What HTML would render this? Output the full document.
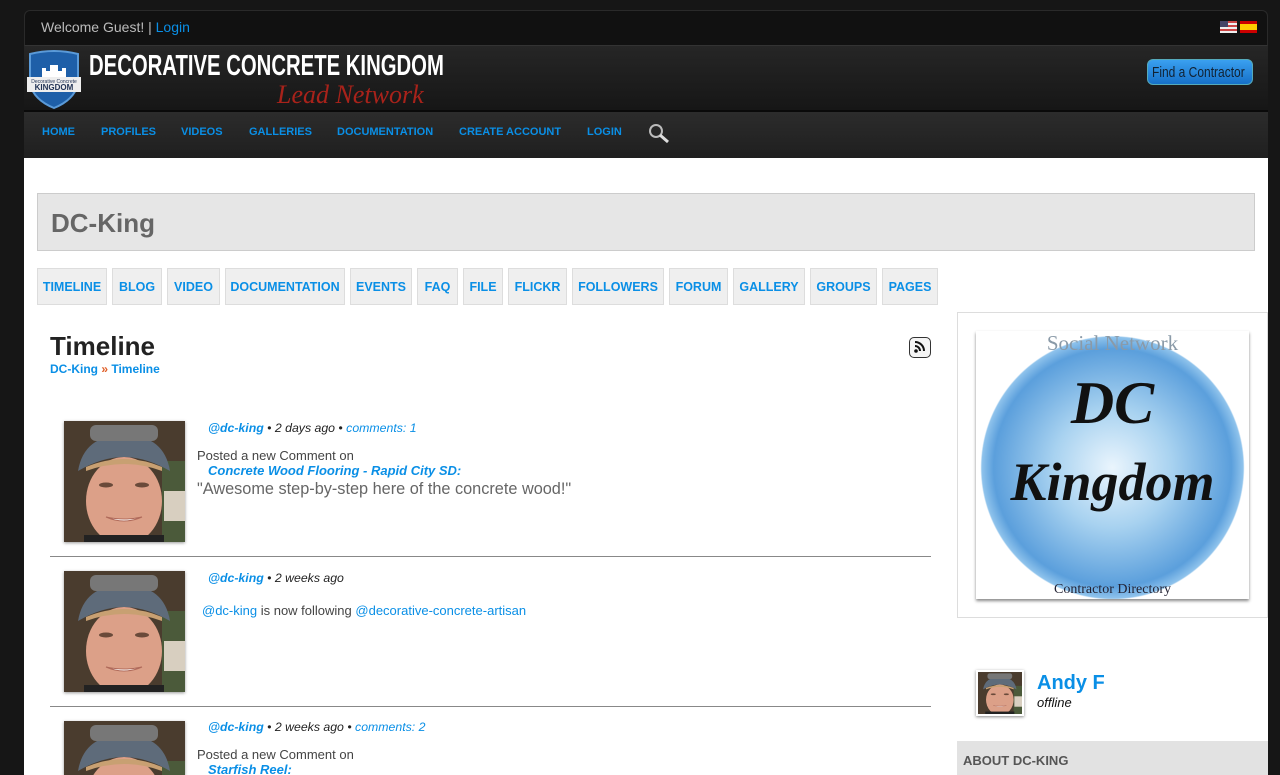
<!DOCTYPE html>
<html style="overflow:hidden;height:775px"><head><meta charset="utf-8">
<style>
*{margin:0;padding:0;box-sizing:border-box}
body{width:1280px;height:775px;overflow:hidden;background:#161616;font-family:"Liberation Sans",Arial,sans-serif;position:relative}
.abs{position:absolute}
a{color:#0a8fe6;text-decoration:none}
.top{left:24px;top:10px;width:1244px;height:36px;background:#111;border-radius:6px 6px 0 0;border:1px solid #2a2a2a;border-bottom:1px solid #333}
.hdr{left:24px;top:46px;width:1244px;height:66px;background:linear-gradient(#262626,#161616);border-bottom:2px solid #0a0a0a}
.nav{left:24px;top:112px;width:1244px;height:46px;background:linear-gradient(#2c2c2c,#1f1f1f)}
.nav span{position:absolute;top:14px;font-size:11px;font-weight:bold;color:#0a8fe6}
.main{left:24px;top:158px;width:1244px;height:617px;background:#fff;overflow:hidden}
.tab{position:absolute;top:268px;height:37px;background:#efefef;border:1px solid #ddd;font-size:12.5px;font-weight:bold;color:#0a8fe6;text-align:center;line-height:36px}
.av{position:absolute;width:121px;height:121px;box-shadow:0 1px 3px #999}
.meta{position:absolute;font-size:12.3px;font-style:italic;color:#222;white-space:nowrap}
.meta b{color:#0a8fe6}
.hr{position:absolute;left:50px;width:881px;height:1px;background:#888}
</style></head><body>
<svg width="0" height="0" style="position:absolute;top:0;left:0"><defs>
<symbol id="face" viewBox="0 0 121 121">
<rect width="121" height="121" fill="#4a3c2e"/>
<rect x="98" y="40" width="23" height="81" fill="#4b5a3a"/>
<rect x="100" y="70" width="21" height="30" fill="#d8cfc0"/>
<ellipse cx="60" cy="80" rx="38" ry="44" fill="#dca088"/>
<path d="M14 50 Q20 14 60 14 Q100 14 106 50 Q82 36 60 36 Q38 36 14 50Z" fill="#5e6b7a"/>
<path d="M22 46 Q60 30 98 46 L98 50 Q60 36 22 50Z" fill="#c8a072"/>
<rect x="26" y="4" width="68" height="16" rx="6" fill="#777"/>
<ellipse cx="42" cy="64" rx="7" ry="2.5" fill="#6a4a3a"/>
<ellipse cx="78" cy="64" rx="7" ry="2.5" fill="#6a4a3a"/>
<path d="M42 96 Q60 104 78 96 Q60 100 42 96Z" fill="#fff" stroke="#b06a5a" stroke-width="1"/>
<rect x="20" y="114" width="80" height="7" fill="#222"/>
</symbol></defs></svg>

<div class="abs top"><span class="abs" style="left:16px;top:8px;font-size:14px;color:#bbb">Welcome Guest! | <a style="color:#0a8fe6">Login</a></span>
<div class="abs" style="left:1195px;top:10px;width:17px;height:12px;background:repeating-linear-gradient(#c44 0 2px,#eee 2px 4px)"><div style="width:8px;height:6px;background:#446"></div></div>
<div class="abs" style="left:1215px;top:10px;width:17px;height:12px;background:linear-gradient(#c00 0 3px,#fc0 3px 9px,#c00 9px)"></div>
</div>
<div class="abs hdr">
<svg class="abs" style="left:2px;top:4px" width="56" height="60" viewBox="0 0 56 60"><path d="M4 4 Q28 -2 52 4 L52 34 Q48 50 28 58 Q8 50 4 34Z" fill="#1e5fa8" stroke="#5a9ad8" stroke-width="2"/><path d="M16 28 V18 h4 v3 h4 v-6 h8 v6 h4 v-3 h4 v10Z" fill="#fff"/><rect x="1" y="27" width="54" height="15" fill="#eee"/><text x="28" y="33" font-size="5" text-anchor="middle" fill="#235" font-family="Liberation Sans">Decorative Concrete</text><text x="28" y="40" font-size="8" font-weight="bold" text-anchor="middle" fill="#235" font-family="Liberation Sans">KINGDOM</text></svg>
<div class="abs" style="left:65px;top:4px;font-family:'Liberation Sans',sans-serif;font-weight:bold;font-size:29px;color:#fff;white-space:nowrap;transform:scaleX(0.7);transform-origin:left">DECORATIVE CONCRETE KINGDOM</div>
<div class="abs" style="left:253px;top:34px;font-family:'Liberation Serif',serif;font-style:italic;font-size:26px;color:#a8221a">Lead Network</div>
<div class="abs" style="left:1123px;top:13px;width:106px;height:26px;border-radius:6px;background:linear-gradient(#3aa0f0,#1670c8);border:1px solid #5ab;overflow:hidden"><span style="position:absolute;left:4px;top:4px;color:#123;font-size:15px;white-space:nowrap;transform:scaleX(0.8);transform-origin:left">Find a Contractor</span></div>
</div>
<div class="abs nav">
<span style="left:18px">HOME</span><span style="left:77px">PROFILES</span><span style="left:157px">VIDEOS</span><span style="left:225px">GALLERIES</span><span style="left:313px">DOCUMENTATION</span><span style="left:435px">CREATE ACCOUNT</span><span style="left:563px">LOGIN</span>
<svg class="abs" style="left:624px;top:11px" width="24" height="22"><circle cx="8" cy="8" r="6" fill="none" stroke="#bbb" stroke-width="2"/><path d="M12 12 L20 19" stroke="#ddd" stroke-width="3"/></svg>
</div>
<div class="abs main">

<div class="abs" style="left:13px;top:35px;width:1218px;height:58px;background:#e6e6e6;border:1px solid #ccc"><span class="abs" style="left:13px;top:14px;font-size:26px;font-weight:bold;color:#666">DC-King</span></div>

<div style="position:absolute;left:-24px;top:-158px;width:1280px;height:775px;overflow:hidden">
<div class="tab" style="left:37px;width:70px">TIMELINE</div>
<div class="tab" style="left:112px;width:50px">BLOG</div>
<div class="tab" style="left:167px;width:53px">VIDEO</div>
<div class="tab" style="left:225px;width:120px">DOCUMENTATION</div>
<div class="tab" style="left:350px;width:62px">EVENTS</div>
<div class="tab" style="left:417px;width:41px">FAQ</div>
<div class="tab" style="left:463px;width:40px">FILE</div>
<div class="tab" style="left:508px;width:59px">FLICKR</div>
<div class="tab" style="left:572px;width:92px">FOLLOWERS</div>
<div class="tab" style="left:669px;width:59px">FORUM</div>
<div class="tab" style="left:733px;width:72px">GALLERY</div>
<div class="tab" style="left:810px;width:67px">GROUPS</div>
<div class="tab" style="left:882px;width:56px">PAGES</div>

<div class="abs" style="left:50px;top:331px;font-size:26px;font-weight:bold;color:#222">Timeline</div>
<div class="abs" style="left:50px;top:362px;font-size:12px;font-weight:bold;color:#0a8fe6">DC-King <span style="color:#e0602a">»</span> Timeline</div>
<div class="abs" style="left:909px;top:337px;width:22px;height:21px;border:1.5px solid #333;border-radius:5px;background:#f4f4f4"><svg width="19" height="18" viewBox="0 0 19 18"><circle cx="6" cy="13" r="1.8" fill="#111"/><path d="M5 8 A5 5 0 0 1 10 13" stroke="#111" stroke-width="2" fill="none"/><path d="M5 4 A9 9 0 0 1 14 13" stroke="#111" stroke-width="2" fill="none"/></svg></div>

<svg class="av" style="left:64px;top:421px"><use href="#face"/></svg>
<div class="meta" style="left:208px;top:421px"><b>@dc-king</b> • 2 days ago • <a>comments: 1</a></div>
<div class="abs" style="left:197px;top:448px;font-size:13px;color:#444">Posted a new Comment on</div>
<div class="abs" style="left:208px;top:463px;font-size:13px;font-weight:bold;font-style:italic;color:#0a8fe6">Concrete Wood Flooring - Rapid City SD:</div>
<div class="abs" style="left:197px;top:480px;font-size:16.3px;color:#666">"Awesome step-by-step here of the concrete wood!"</div>
<div class="hr" style="top:556px"></div>

<svg class="av" style="left:64px;top:571px"><use href="#face"/></svg>
<div class="meta" style="left:208px;top:571px"><b>@dc-king</b> • 2 weeks ago</div>
<div class="abs" style="left:202px;top:603px;font-size:13px;color:#444"><a>@dc-king</a> is now following <a>@decorative-concrete-artisan</a></div>
<div class="hr" style="top:706px"></div>

<svg class="av" style="left:64px;top:721px;height:54px" viewBox="0 0 121 54" preserveAspectRatio="xMidYMin slice"><use href="#face" width="121" height="121"/></svg>
<div class="meta" style="left:208px;top:720px"><b>@dc-king</b> • 2 weeks ago • <a>comments: 2</a></div>
<div class="abs" style="left:197px;top:747px;font-size:13px;color:#444">Posted a new Comment on</div>
<div class="abs" style="left:208px;top:762px;font-size:13px;font-weight:bold;font-style:italic;color:#0a8fe6">Starfish Reel:</div>

<div class="abs" style="left:957px;top:312px;width:311px;height:306px;border:1px solid #ddd;background:#fff"></div>
<div class="abs" style="left:976px;top:331px;width:273px;height:268px;box-shadow:0 2px 3px #888;background:radial-gradient(circle 132px at 50% 51%,#eaf5fd 0,#a8d2f0 45%,#5b9fdc 90%,#8fc3ec 99%,#fff 100%);overflow:hidden">
<div class="abs" style="left:0;width:273px;top:0;text-align:center;font-family:'Liberation Serif',serif;font-size:21px;color:#8a9aa8">Social Network</div>
<div class="abs" style="left:0;width:273px;top:38px;text-align:center;font-family:'Liberation Serif',serif;font-style:italic;font-weight:bold;font-size:60px;color:#111">DC</div>
<div class="abs" style="left:0;width:273px;top:120px;text-align:center;font-family:'Liberation Serif',serif;font-style:italic;font-weight:bold;font-size:54px;color:#111">Kingdom</div>
<div class="abs" style="left:0;width:273px;top:251px;text-align:center;font-family:'Liberation Serif',serif;font-size:14px;color:#223">Contractor Directory</div>
</div>

<svg class="abs" style="left:976px;top:670px;width:48px;height:46px;box-shadow:0 1px 3px #888;border:2px solid #fff" viewBox="0 0 121 121" preserveAspectRatio="none"><use href="#face"/></svg>
<div class="abs" style="left:1037px;top:672px;font-size:20px;font-weight:bold;color:#0a8fe6">Andy F</div>
<div class="abs" style="left:1037px;top:695px;font-size:13px;font-style:italic;color:#111">offline</div>
<div class="abs" style="left:957px;top:741px;width:311px;height:34px;background:#e2e2e2"><span class="abs" style="left:6px;top:12px;font-size:13px;font-weight:bold;color:#555">ABOUT DC-KING</span></div>
</div>
</div>
</body></html>
